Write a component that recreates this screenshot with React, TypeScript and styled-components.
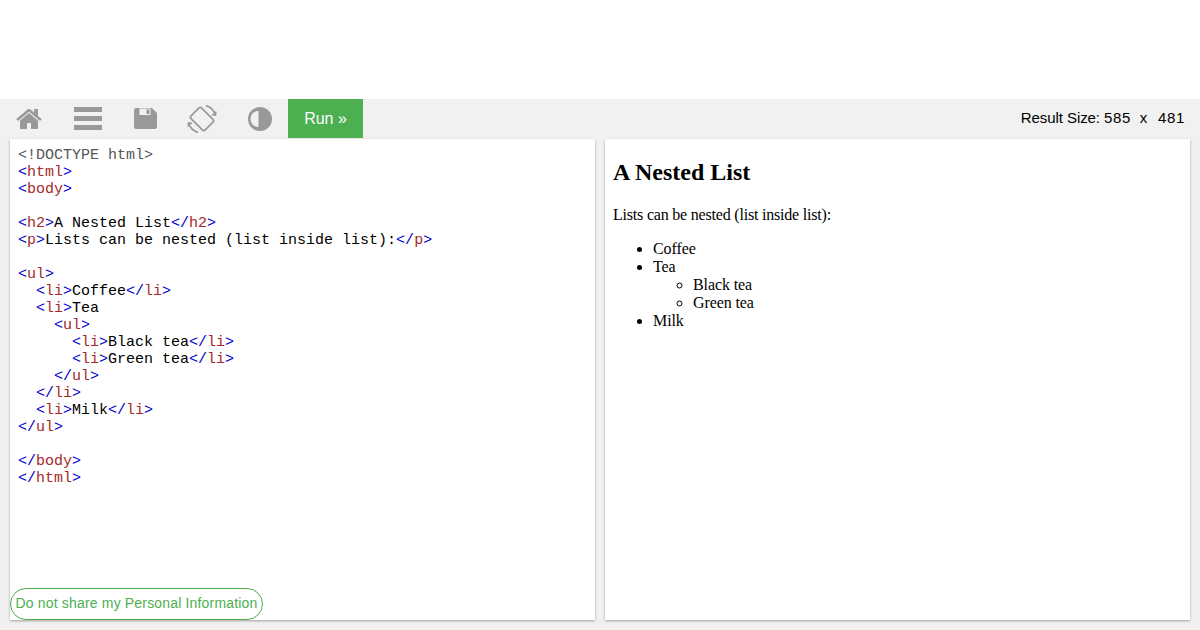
import React from "react";
import styled, { createGlobalStyle } from "styled-components";

const Global = createGlobalStyle`
  html, body { margin: 0; padding: 0; height: 100%; overflow: hidden; background: #f1f1f1; }
  #root { height: 100%; }
`;

const Page = styled.div`
  width: 1200px;
  height: 630px;
  display: flex;
  flex-direction: column;
  background: #f1f1f1;
  font-family: "Liberation Sans", Arial, sans-serif;
`;
const AdSpace = styled.div`
  height: 99px;
  background: #fff;
`;
const Toolbar = styled.div`
  height: 40px;
  display: flex;
  align-items: flex-start;
  background: #f1f1f1;
`;
const IconSlot = styled.div<{ $w: number }>`
  width: ${(p) => p.$w}px;
  height: 39px;
  display: flex;
  align-items: center;
  justify-content: center;
  flex: none;
`;
const RunButton = styled.button`
  width: 75px;
  height: 39px;
  border: 0;
  padding: 0;
  background: #4caf50;
  color: #fff;
  font: 16px "Liberation Sans", Arial, sans-serif;
`;
const SizeLabel = styled.div`
  margin-left: auto;
  padding-right: 15px;
  height: 39px;
  line-height: 38px;
  font-size: 15px;
  color: #000;
  white-space: pre;
`;
const Caption = styled.span`
  letter-spacing: -0.08px;
`;
const Digits = styled.span`
  letter-spacing: 0.66px;
`;
const Times = styled.span`
  margin: 0 2.4px 0 0.4px;
`;
const Panels = styled.div`
  display: flex;
  gap: 10px;
  padding: 0 10px;
  height: 481px;
`;
const Panel = styled.div`
  position: relative;
  width: 585px;
  height: 481px;
  background: #fff;
  box-shadow: 0 1px 3px rgba(0, 0, 0, 0.12), 0 1px 2px rgba(0, 0, 0, 0.24);
`;
const Code = styled.pre`
  margin: 0;
  padding: 8px;
  font: 15px/17px "Liberation Mono", "Courier New", monospace;
  color: #000;
`;
const Doctype = styled.span`
  color: #555;
`;
const B = styled.span`
  color: #0000cd;
`;
const N = styled.span`
  color: #a52a2a;
`;
const Consent = styled.button`
  position: absolute;
  left: 0;
  bottom: 0;
  width: 253px;
  height: 32px;
  padding: 0 0 2px;
  background: #fff;
  color: #4caf50;
  border: 1px solid #4caf50;
  border-radius: 16px;
  font: 14px "Liberation Sans", Arial, sans-serif;
  letter-spacing: 0.17px;
  white-space: nowrap;
`;
const Result = styled.div`
  padding: 8px;
  font: 16px "Liberation Serif", "Times New Roman", serif;
  color: #000;
  h2 { font-size: 24px; margin: 12px 0 20px; line-height: 27px; }
  p { margin: 0 0 16px; line-height: 18px; letter-spacing: -0.2px; }
  ul { margin: 0; padding-left: 40px; line-height: 18px; letter-spacing: -0.1px; }
  ul ul { list-style: circle; }
`;

const Tag = ({ c, name }: { c?: boolean; name: string }) => (
  <>
    <B>{c ? "</" : "<"}</B>
    <N>{name}</N>
    <B>&gt;</B>
  </>
);

const HomeIcon = () => (
  <svg width="28" height="28" viewBox="0 0 1792 1792" fill="#999">
    <path d="M1472 992v480q0 26-19 45t-45 19h-384v-384h-256v384h-384q-26 0-45-19t-19-45v-480q0-1 .5-3t.5-3l575-474 575 474q1 2 1 6zm223-69l-62 74q-8 9-21 11h-3q-13 0-21-7l-692-577-692 577q-12 8-24 7-13-2-21-11l-62-74q-8-10-7-23.500t11-21.500l719-599q32-26 76-26t76 26l244 204v-195q0-14 9-23t23-9h192q14 0 23 9t9 23v408l219 182q10 8 11 21.500t-7 23.500z" />
  </svg>
);

const BarsIcon = () => (
  <svg width="28" height="23" viewBox="0 0 28 23" fill="#999">
    <rect y="0" width="28" height="5" />
    <rect y="9" width="28" height="5" />
    <rect y="18" width="28" height="5" />
  </svg>
);

const SaveIcon = () => (
  <svg width="23" height="21" viewBox="0 0 23 21">
    <path d="M2 0H18L23 5V19A2 2 0 0 1 21 21H2A2 2 0 0 1 0 19V2A2 2 0 0 1 2 0Z" fill="#999" />
    <rect x="5.500" y="0.500" width="11" height="6.500" fill="#f1f1f1" />
    <rect x="12.500" y="1.500" width="3" height="4.500" fill="#999" />
  </svg>
);

const RotateIcon = () => (
  <svg width="30" height="30" viewBox="0 0 30 30" fill="none" stroke="#999" strokeWidth="1.7">
    <rect x="7.500" y="5" width="15" height="20" rx="2" transform="rotate(-45 15 15)" />
    <path d="M19 1.600A14 14 0 0 1 28.400 11" />
    <path d="M11 28.400A14 14 0 0 1 1.600 19" />
    <path d="M28.800 7.500L28.400 11L24.900 10.500M1.200 22.500L1.600 19L5.100 19.500" />
  </svg>
);

const AdjustIcon = () => (
  <svg width="24" height="24" viewBox="0 0 24 24">
    <circle cx="12" cy="12" r="12" fill="#999" />
    <path d="M10.500 4A8 8 0 0 0 10.500 20Z" fill="#f1f1f1" />
  </svg>
);

export default function App() {
  return (
    <Page>
      <Global />
      <AdSpace />
      <Toolbar>
        <IconSlot $w={58}>
          <HomeIcon />
        </IconSlot>
        <IconSlot $w={60}>
          <BarsIcon />
        </IconSlot>
        <IconSlot $w={55}>
          <SaveIcon />
        </IconSlot>
        <IconSlot $w={58}>
          <RotateIcon />
        </IconSlot>
        <IconSlot $w={57}>
          <AdjustIcon />
        </IconSlot>
        <RunButton>Run »</RunButton>
        <SizeLabel>
          <Caption>Result Size: </Caption>
          <Digits>585</Digits>
          {"  "}
          <Times>x</Times>
          {"  "}
          <Digits>481</Digits>
        </SizeLabel>
      </Toolbar>
      <Panels>
        <Panel>
          <Code>
            <Doctype>&lt;!DOCTYPE html&gt;</Doctype>
            {"\n"}
            <Tag name="html" />
            {"\n"}
            <Tag name="body" />
            {"\n\n"}
            <Tag name="h2" />A Nested List<Tag c name="h2" />
            {"\n"}
            <Tag name="p" />Lists can be nested (list inside list):<Tag c name="p" />
            {"\n\n"}
            <Tag name="ul" />
            {"\n  "}
            <Tag name="li" />Coffee<Tag c name="li" />
            {"\n  "}
            <Tag name="li" />Tea
            {"\n    "}
            <Tag name="ul" />
            {"\n      "}
            <Tag name="li" />Black tea<Tag c name="li" />
            {"\n      "}
            <Tag name="li" />Green tea<Tag c name="li" />
            {"\n    "}
            <Tag c name="ul" />
            {"\n  "}
            <Tag c name="li" />
            {"\n  "}
            <Tag name="li" />Milk<Tag c name="li" />
            {"\n"}
            <Tag c name="ul" />
            {"\n\n"}
            <Tag c name="body" />
            {"\n"}
            <Tag c name="html" />
          </Code>
          <Consent>Do not share my Personal Information</Consent>
        </Panel>
        <Panel>
          <Result>
            <h2>A Nested List</h2>
            <p>Lists can be nested (list inside list):</p>
            <ul>
              <li>Coffee</li>
              <li>
                Tea
                <ul>
                  <li>Black tea</li>
                  <li>Green tea</li>
                </ul>
              </li>
              <li>Milk</li>
            </ul>
          </Result>
        </Panel>
      </Panels>
    </Page>
  );
}
